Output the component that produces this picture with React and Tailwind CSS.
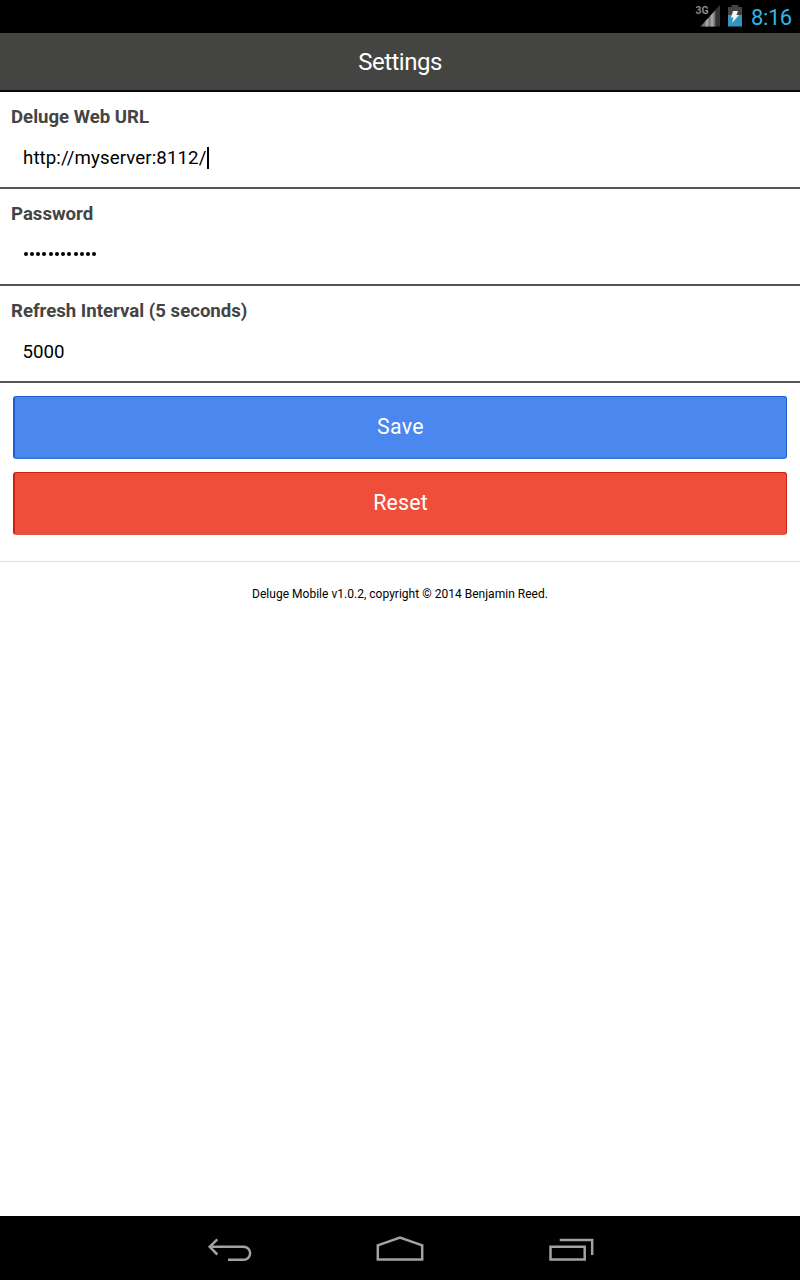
function StatusBar() {
  return (
    <div className="flex h-[33px] shrink-0 items-start justify-end bg-black">
      <svg className="mt-1 h-[24px] w-[26px]" viewBox="0 0 26 24">
        <text x="0.5" y="10.3" fill="#8a8a8a" fontSize="11.5" fontWeight="700" fontFamily="Roboto, sans-serif" textLength="13" lengthAdjust="spacingAndGlyphs">3G</text>
        <path d="M25 1v21.5h-4.5V5.500z" fill="#333" />
        <path d="M5.500 22.500 20.500 6v16.500z" fill="#777" />
        <path d="M10.500 17v5.500h3V14zM15.500 11.500v11h3V8.500z" fill="#a5a5a5" />
      </svg>
      <svg className="ml-[7px] mt-1 h-[24px] w-[14px]" viewBox="0 0 14 24">
        <path d="M3.500 1h7v2H14v8H0V3h3.500z" fill="#444" />
        <path d="M0 11h14v11.500H0z" fill="#3594bf" />
        <path d="M5 7h5L8.500 11H11L4 19l1.500-5.500H3z" fill="#f2f2f2" />
      </svg>
      <span className="ml-[9px] mr-2 mt-1 w-[41px] whitespace-nowrap text-[22px] leading-[28px] tracking-[-0.400px] text-[#33b5e5]">8:16</span>
    </div>
  );
}

function Field({ label, children }) {
  return (
    <div className="flex h-[97px] shrink-0 flex-col border-b-2 border-[#555] pl-[11px]">
      <div className="mt-3 h-[26px] text-[18.600px] font-bold leading-[26px] text-[#444]">{label}</div>
      <div className="ml-3 mt-[15px] flex h-[26px] items-center text-[18.700px] leading-[26px] text-black">{children}</div>
    </div>
  );
}

function NavBar() {
  return (
    <div className="flex h-16 shrink-0 items-center justify-center bg-black">
      <svg className="h-16 w-[400px]" viewBox="200 1216 400 64" fill="none" stroke="#a2a2a2" strokeWidth="2.500">
        <path d="M217.300 1239.300 209.700 1246.800l7.600 7.700M210 1246.800h33.700a6.450 6.450 0 0 1 0 12.900H228" />
        <path d="M377.800 1259.500v-14.200L400 1237.600l22.200 7.700v14.200z" />
        <path d="M550.500 1246.700h34.200v12.800h-34.200zM559.700 1240H592.200v15" />
      </svg>
    </div>
  );
}

export default function App() {
  return (
    <div className="flex h-[1280px] w-[800px] flex-col overflow-hidden bg-white font-['Roboto',sans-serif]">
      <StatusBar />
      <header className="flex h-[59px] shrink-0 items-center justify-center border-b-2 border-[#080808] bg-[#444542] pt-px text-[24px] tracking-[-0.500px] text-white">
        Settings
      </header>
      <Field label="Deluge Web URL">
        <span className="tracking-[0.090px]">http://myserver:8112/</span>
        <span className="h-[22px] w-[2px] bg-black" />
      </Field>
      <Field label="Password">
        <span className="mb-[3px] flex gap-[2.270px] pl-[0.500px]">
          {Array.from({ length: 12 }, (_, i) => (
            <span key={i} className="h-1 w-1 rounded-full bg-black" />
          ))}
        </span>
      </Field>
      <Field label="Refresh Interval (5 seconds)"><span className="-ml-[0.500px]">5000</span></Field>
      <div className="flex shrink-0 flex-col gap-[13px] px-[13px] pt-[13px]">
        <button className="h-[63px] rounded-[3px] border border-b-2 border-l-2 border-[#1b5fd3] border-b-[#3b78dc] bg-[#4a87ee] text-[21.300px] tracking-[0.350px] text-white">Save</button>
        <button className="h-[63px] rounded-[3px] border border-b-2 border-l-2 border-[#cc2311] border-b-[#dd5748] bg-[#ef4e3a] text-[21.300px] tracking-[0.200px] text-white">Reset</button>
      </div>
      <footer className="mt-[26px] flex-1 border-t border-[#ddd] pt-[23px] text-center text-[12px] leading-[18px] tracking-[0.020px] text-black">
        Deluge Mobile v1.0.2, copyright © 2014 Benjamin Reed.
      </footer>
      <NavBar />
    </div>
  );
}
